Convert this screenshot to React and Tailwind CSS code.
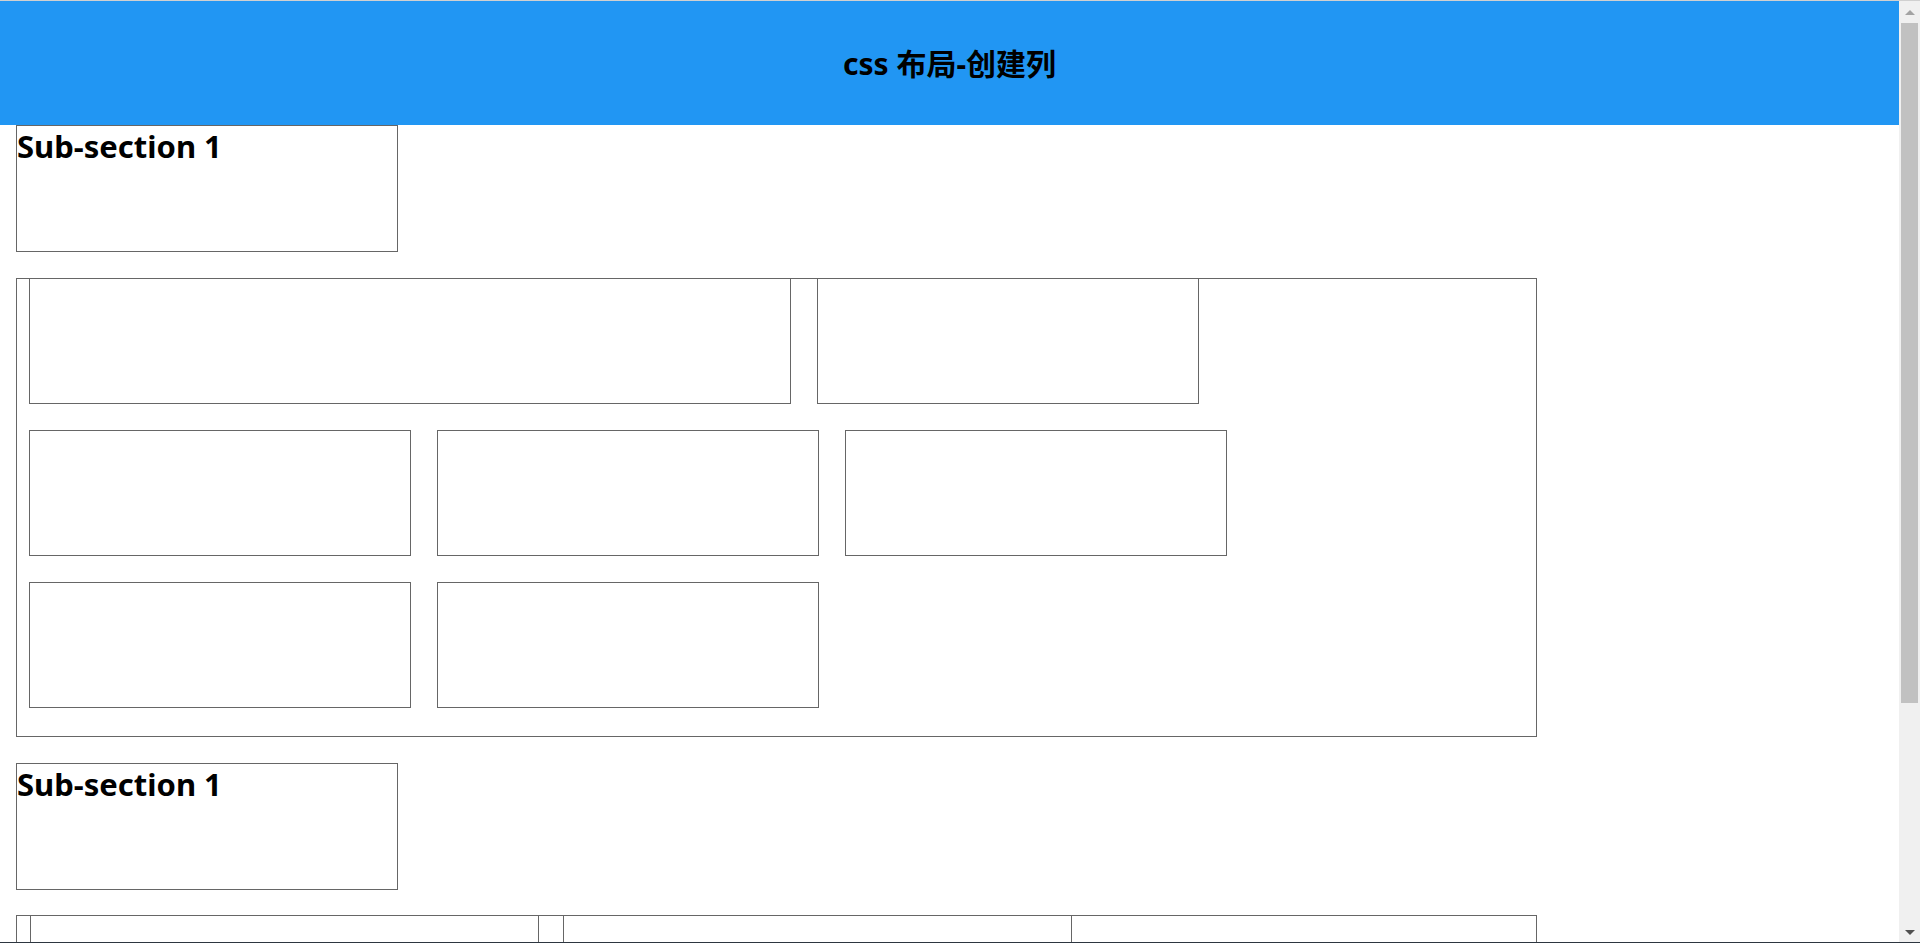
const SANS = "font-['Noto_Sans','Noto_Sans_CJK_SC',sans-serif]";

function Box({ w = "w-[382px]", h = "h-[126px]", title, className = "" }) {
  return (
    <div className={`${w} ${h} shrink-0 border border-[#666] ${className}`}>
      {title && (
        <h2 className={`${SANS} m-0 text-[31px] font-bold leading-[41px] text-black`}>{title}</h2>
      )}
    </div>
  );
}

function Scrollbar() {
  return (
    <div className="w-[21px] shrink-0 bg-[#f0f0f0] flex flex-col items-center">
      <div className="h-[22px] flex items-center justify-center w-full">
        <div className="w-0 h-0 border-l-[5px] border-r-[5px] border-b-[5px] border-l-transparent border-r-transparent border-b-[#a3a3a3]" />
      </div>
      <div className="w-[17px] h-[680px] bg-[#c1c1c1]" />
      <div className="flex-1" />
      <div className="h-[20px] flex items-center justify-center w-full">
        <div className="w-0 h-0 border-l-[5px] border-r-[5px] border-t-[5px] border-l-transparent border-r-transparent border-t-[#505050]" />
      </div>
    </div>
  );
}

export default function App() {
  return (
    <div className="w-[1920px] h-[943px] flex flex-col overflow-hidden bg-white">
      <div className="h-px bg-[#d0d0d0] shrink-0" />
      <div className="flex flex-1 min-h-0">
        <main className="w-[1899px] shrink-0 overflow-hidden">
          {/* Header */}
          <header className="h-[124px] bg-[#2196f3] flex items-center justify-center">
            <h1 className={`${SANS} text-[30px] font-bold text-black`}>css 布局-创建列</h1>
          </header>

          <div className="pl-[16px]">
            <Box title="Sub-section 1" h="h-[127px]" className="mb-[26px]" />

            {/* Column grid */}
            <div className="w-[1521px] border border-[#666] pl-[12px] pb-[2px] mb-[26px]">
              <div className="flex gap-[26px] -mt-px">
                <Box w="w-[762px]" className="mb-[26px]" />
                <Box className="mb-[26px]" />
              </div>
              <div className="flex gap-[26px]">
                <Box className="mb-[26px]" />
                <Box className="mb-[26px]" />
                <Box className="mb-[26px]" />
              </div>
              <div className="flex gap-[26px]">
                <Box className="mb-[26px]" />
                <Box className="mb-[26px]" />
              </div>
            </div>

            <Box title="Sub-section 1" h="h-[127px]" className="mb-[25px]" />

            <div className="w-[1521px] border border-[#666] pl-[13px]">
              <div className="flex gap-[24px] -mt-px">
                <Box w="w-[509px]" className="mb-[26px]" />
                <Box w="w-[509px]" className="mb-[26px]" />
              </div>
            </div>
          </div>
        </main>
        <Scrollbar />
      </div>
      <div className="h-px bg-[#2d3640] shrink-0" />
    </div>
  );
}
